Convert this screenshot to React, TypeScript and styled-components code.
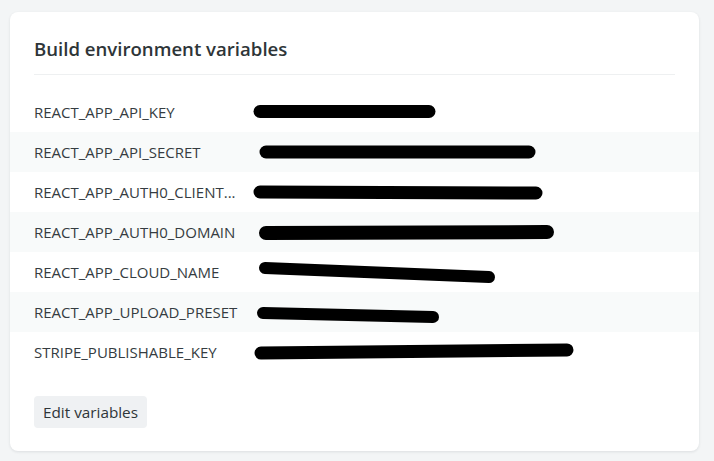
import styled, { createGlobalStyle } from 'styled-components';

const Global = createGlobalStyle`
    html, body {
        margin: 0;
        background: #f3f5f6;
        font-family: "Open Sans", "Noto Sans", sans-serif;
    }
`;

const Page = styled.div`
    padding: 12px 15px 10px 10px;
`;

const Card = styled.section`
    background: #fff;
    border-radius: 8px;
    box-shadow: 0 1px 3px rgba(20, 30, 40, 0.1);
    padding: 24px 0 23px;
`;

const Header = styled.div`
    margin: 0 24px;
    padding-bottom: 12px;
    border-bottom: 1px solid #eef0f1;
`;

const Title = styled.h2`
    margin: 0;
    font-size: 18.6px;
    line-height: 26px;
    font-weight: 600;
    color: #2e3538;
`;

const List = styled.div`
    margin-top: 17px;
`;

const Row = styled.div<{ $striped: boolean }>`
    display: grid;
    grid-template-columns: 208px 1fr;
    column-gap: 12px;
    align-items: center;
    height: 40px;
    padding: 0 24px;
    background: ${(p) => (p.$striped ? '#f8fafa' : 'transparent')};
`;

const Key = styled.span`
    font-size: 15px;
    color: #353c41;
    white-space: nowrap;
`;

const Value = styled.div`
    position: relative;
    height: 40px;
`;

const Redaction = styled.svg`
    position: absolute;
    left: 0;
    top: 0;
    overflow: visible;
`;

const Footer = styled.div`
    margin: 24px 24px 0;
`;

const Button = styled.button`
    height: 32px;
    padding: 0 9px;
    border: 0;
    border-radius: 4px;
    background: #eff1f3;
    color: #2e3538;
    font-family: inherit;
    font-size: 15.3px;
    cursor: pointer;
`;

const shorten = (k: string) => (k.length > 22 && k.includes('CLIENT') ? k.slice(0, 22) + '...' : k);

// redaction strokes, coords relative to the value cell (x from 254, y from row top)
const vars = [
    { key: 'REACT_APP_API_KEY', x1: 6, y1: 19.5, x2: 175, y2: 19.5, w: 13 },
    { key: 'REACT_APP_API_SECRET', x1: 12, y1: 20, x2: 275, y2: 20, w: 13 },
    { key: 'REACT_APP_AUTH0_CLIENT_ID', x1: 6, y1: 20, x2: 282, y2: 21, w: 13 },
    { key: 'REACT_APP_AUTH0_DOMAIN', x1: 12, y1: 21, x2: 293, y2: 20, w: 14 },
    { key: 'REACT_APP_CLOUD_NAME', x1: 11, y1: 16, x2: 235, y2: 25, w: 12 },
    { key: 'REACT_APP_UPLOAD_PRESET', x1: 9, y1: 21, x2: 179, y2: 25, w: 12 },
    { key: 'STRIPE_PUBLISHABLE_KEY', x1: 7, y1: 21, x2: 313, y2: 18, w: 13 },
];

export default function App() {
    return (
        <>
            <Global />
            <Page>
                <Card>
                    <Header>
                        <Title>Build environment variables</Title>
                    </Header>
                    <List>
                        {vars.map((v, i) => (
                            <Row key={v.key} $striped={i % 2 === 1}>
                                <Key title={v.key}>{shorten(v.key)}</Key>
                                <Value>
                                    <Redaction width="330" height="40">
                                        <line
                                            x1={v.x1}
                                            y1={v.y1}
                                            x2={v.x2}
                                            y2={v.y2}
                                            stroke="#000"
                                            strokeWidth={v.w}
                                            strokeLinecap="round"
                                        />
                                    </Redaction>
                                </Value>
                            </Row>
                        ))}
                    </List>
                    <Footer>
                        <Button>Edit variables</Button>
                    </Footer>
                </Card>
            </Page>
        </>
    );
}
